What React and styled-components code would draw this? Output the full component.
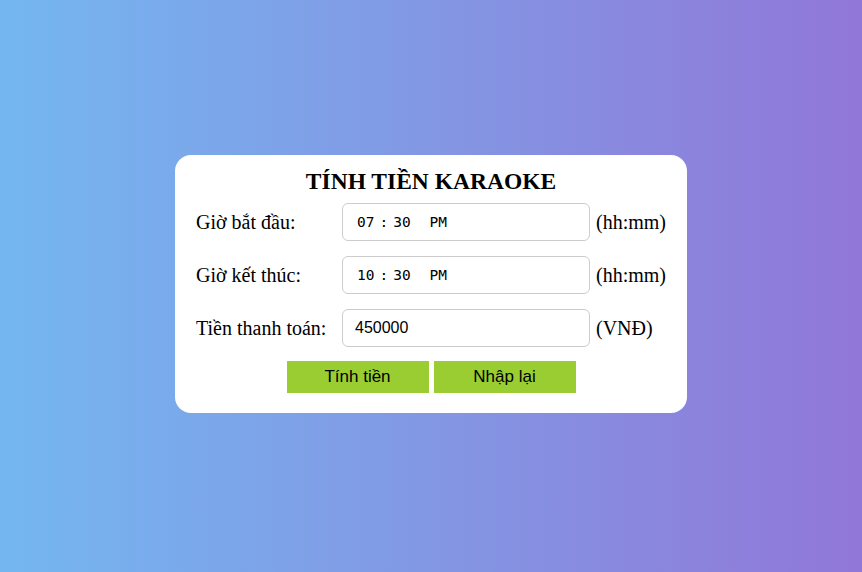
import React from 'react';
import styled, { createGlobalStyle } from 'styled-components';

const GlobalStyle = createGlobalStyle`
  html, body {
    margin: 0;
    padding: 0;
    height: 100%;
  }
  body {
    font-family: "Liberation Serif", "Times New Roman", serif;
  }
`;

const Page = styled.div`
  width: 100vw;
  height: 100vh;
  box-sizing: border-box;
  padding-bottom: 4px;
  background: linear-gradient(to right, #74b7f0, #9177d8);
  display: flex;
  align-items: center;
  justify-content: center;
`;

const Card = styled.form`
  background: white;
  border-radius: 16px;
  width: 512px;
  height: 258px;
  box-sizing: border-box;
  padding: 12px 21px 0 21px;
  display: flex;
  flex-direction: column;
`;

const Title = styled.h2`
  margin: 0 0 8px 0;
  text-align: center;
  font-size: 23.5px;
  font-weight: bold;
  color: #000;
  line-height: 28px;
`;

const Grid = styled.div`
  display: grid;
  grid-template-columns: 140px 248px auto;
  column-gap: 6px;
  row-gap: 15px;
  align-items: center;
`;

const Label = styled.label`
  font-size: 20px;
  color: #000;
`;

const Unit = styled.span`
  font-size: 20px;
  color: #000;
`;

const Field = styled.input`
  box-sizing: border-box;
  width: 248px;
  height: 38px;
  border: 1px solid #ccc;
  border-radius: 6px;
  padding: 0 ${(p) => (p.type === 'time' ? '13px' : '12px')};
  font-family: ${(p) => (p.type === 'time' ? '"DejaVu Sans Mono", monospace' : '"Liberation Sans", Arial, sans-serif')};
  font-size: ${(p) => (p.type === 'time' ? '14.5px' : '16px')};
  color: #000;
  background: white;
  outline: none;

  &::-webkit-calendar-picker-indicator {
    display: none;
  }
  &::-webkit-datetime-edit-text {
    padding: 0 4px;
  }
`;

const Buttons = styled.div`
  display: flex;
  justify-content: center;
  gap: 5px;
  margin-top: 14px;
`;

const Button = styled.button`
  width: 142px;
  height: 32px;
  border: none;
  background: #9acd32;
  color: #000;
  font-family: "Liberation Sans", Arial, sans-serif;
  font-size: 17px;
  cursor: pointer;
`;

const App = () => {
  return (
    <Page>
      <GlobalStyle />
      <Card onSubmit={(e) => e.preventDefault()}>
        <Title>TÍNH TIỀN KARAOKE</Title>
        <Grid>
          <Label>Giờ bắt đầu:</Label>
          <Field type="time" defaultValue="19:30" />
          <Unit>(hh:mm)</Unit>

          <Label>Giờ kết thúc:</Label>
          <Field type="time" defaultValue="22:30" />
          <Unit>(hh:mm)</Unit>

          <Label>Tiền thanh toán:</Label>
          <Field type="text" defaultValue="450000" readOnly />
          <Unit>(VNĐ)</Unit>
        </Grid>
        <Buttons>
          <Button type="submit">Tính tiền</Button>
          <Button type="reset">Nhập lại</Button>
        </Buttons>
      </Card>
    </Page>
  );
};

export default App;
